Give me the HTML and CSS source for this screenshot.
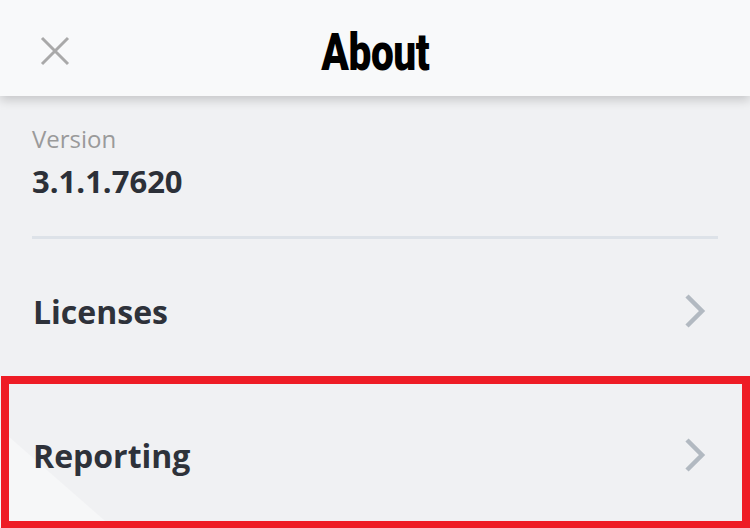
FILE: index.html
```html
<!DOCTYPE html>
<html>
<head>
<meta charset="utf-8">
<link rel="stylesheet" href="styles.css">
</head>
<body>
<div class="screen">
  <header class="topbar">
    <button class="close" aria-label="Close">
      <svg width="30" height="30" viewBox="0 0 30 30"><path d="M2 2 L28 28 M28 2 L2 28" stroke="#a9a9a9" stroke-width="3" fill="none"/></svg>
    </button>
    <h1 class="title"><span>About</span></h1>
  </header>
  <main class="content">
    <section class="version">
      <div class="label">Version</div>
      <div class="value">3.1.1.7620</div>
    </section>
    <div class="divider"></div>
    <div class="row">
      <span class="row-text">Licenses</span>
      <svg class="chev" width="22" height="36" viewBox="0 0 22 36"><path d="M3 3 L18 18 L3 33" stroke="#b2b9c1" stroke-width="4.5" fill="none"/></svg>
    </div>
    <div class="row row-reporting">
      <span class="row-text">Reporting</span>
      <svg class="chev" width="22" height="36" viewBox="0 0 22 36"><path d="M3 3 L18 18 L3 33" stroke="#b2b9c1" stroke-width="4.5" fill="none"/></svg>
      <div class="highlight"></div>
    </div>
  </main>
</div>
</body>
</html>
```
FILE: styles.css
```css
* { box-sizing: border-box; }
html, body { margin: 0; padding: 0; }
body {
  width: 750px;
  height: 528px;
  overflow: hidden;
  background: #f0f1f3;
  font-family: "Open Sans", "Noto Sans", sans-serif;
}
.screen {
  position: relative;
  width: 750px;
  height: 528px;
  overflow: hidden;
}
.topbar {
  position: relative;
  z-index: 2;
  height: 96px;
  background: #f8f9fa;
  box-shadow: 0 4px 10px rgba(0, 0, 0, 0.18);
  display: flex;
  align-items: center;
  justify-content: center;
}
.close {
  position: absolute;
  left: 40px;
  top: 36px;
  padding: 0;
  border: 0;
  background: none;
  width: 30px;
  height: 30px;
  display: block;
}
.close svg { display: block; }
.title {
  margin: 0;
  font-family: Roboto, "Liberation Sans", sans-serif;
  font-weight: 900;
  font-size: 52px;
  line-height: 1;
  color: #000;
  margin-top: 10px;
}
.title span {
  display: inline-block;
  transform: scaleX(0.78);
  letter-spacing: -0.5px;
}
.content {
  padding-top: 26px;
}
.version {
  padding: 0 32px;
}
.label {
  font-size: 24px;
  color: #9a9a9a;
  line-height: 33px;
}
.value {
  margin-top: 5px;
  font-size: 31px;
  font-weight: 700;
  color: #2c3038;
  line-height: 42px;
}
.divider {
  margin: 34px 32px 0 32px;
  height: 3px;
  background: #dde2e8;
}
.row {
  position: relative;
  height: 144px;
  display: flex;
  align-items: center;
  justify-content: space-between;
  padding: 0 44px 0 33px;
}
.row-text {
  position: relative;
  z-index: 1;
  font-size: 32px;
  font-weight: 700;
  color: #2e323a;
}
.chev {
  position: relative;
  z-index: 1;
  display: block;
}
.row-reporting::before {
  content: "";
  position: absolute;
  left: 0;
  top: 0;
  width: 100%;
  height: 100%;
  background: #f6f7f8;
  clip-path: polygon(0 46px, 112px 144px, 0 144px);
}
.highlight {
  position: absolute;
  left: 1px;
  top: -7px;
  width: 749px;
  height: 153px;
  border: 8px solid #ee1c25;
  z-index: 2;
}
```
